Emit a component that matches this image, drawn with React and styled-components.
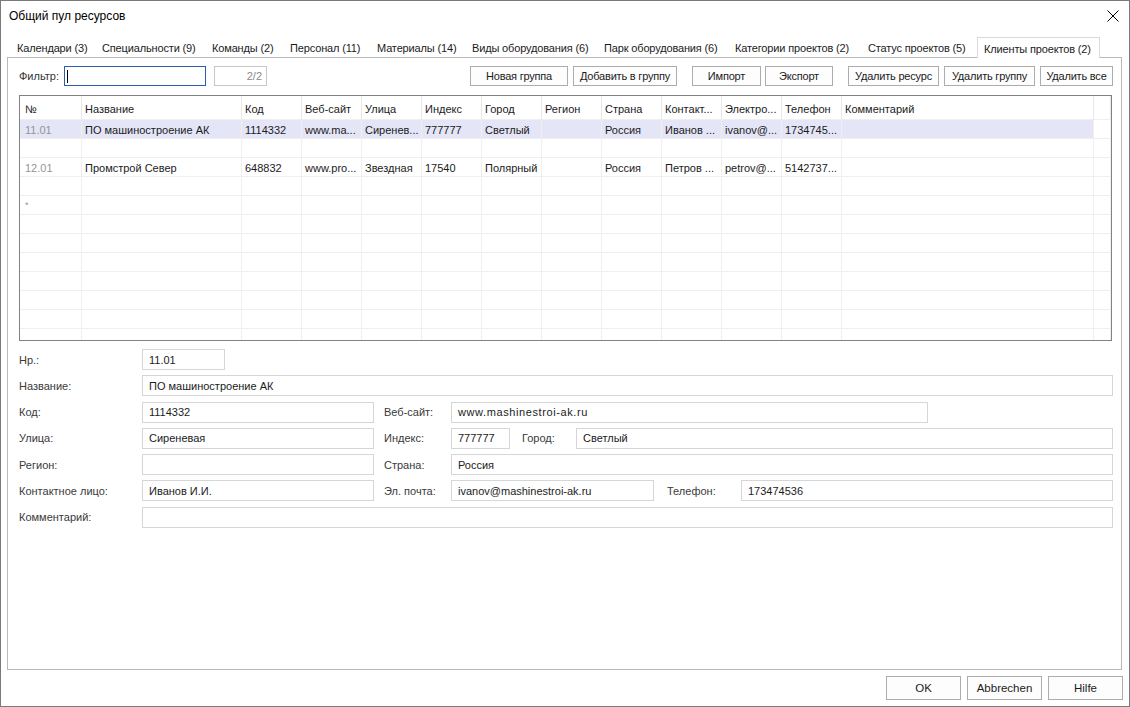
import React from 'react';
import styled, { createGlobalStyle } from 'styled-components';

const GlobalStyle = createGlobalStyle`
  html, body {
    margin: 0;
    padding: 0;
    background: #fff;
  }
  body {
    font-family: "Liberation Sans", Arial, sans-serif;
    font-size: 11px;
    color: #1b1b1b;
  }
  * {
    box-sizing: border-box;
  }
`

const Window = styled.div`
  width: 1130px;
  height: 707px;
  border: 1px solid #7a7a7a;
  display: flex;
  flex-direction: column;
  background: #fff;
`

const TitleBar = styled.div`
  height: 36px;
  flex: none;
  display: flex;
  align-items: center;
  justify-content: space-between;
  padding: 0 9px 6px 8px;
  font-size: 12px;
  color: #000;
`

const CloseButton = styled.div`
  width: 14px;
  height: 14px;
  display: flex;
  align-items: center;
  justify-content: center;
`

const TabStrip = styled.div`
  height: 20px;
  flex: none;
  display: flex;
  align-items: flex-end;
  padding-left: 9px;
  position: relative;
  z-index: 1;
`

const Tab = styled.div`
  width: ${p => p.w}px;
  height: ${p => (p.active ? 21 : 20)}px;
  margin-bottom: ${p => (p.active ? -1 : 0)}px;
  padding-left: ${p => (p.active ? 6 : 7)}px;
  padding-top: 2px;
  display: flex;
  align-items: center;
  white-space: nowrap;
  font-size: 11px;
  letter-spacing: -0.15px;
  color: #1b1b1b;
  background: #fff;
  border: ${p => (p.active ? '1px solid #d9d9d9' : 'none')};
  border-bottom: none;
`

const Panel = styled.div`
  flex: 1;
  margin: 0 7px 0 6px;
  border: 1px solid #b9b9b9;
  padding: 8px 8px 0 11px;
  display: flex;
  flex-direction: column;
`

const Toolbar = styled.div`
  height: 20px;
  display: flex;
  align-items: stretch;
`

const FilterLabel = styled.div`
  width: 45px;
  display: flex;
  align-items: center;
  color: #333;
`

const FilterBox = styled.div`
  width: 142px;
  border: 1px solid #2b5ea8;
  display: flex;
  align-items: center;
  padding-left: 2px;
`

const Caret = styled.span`
  width: 1px;
  height: 13px;
  background: #000;
`

const Counter = styled.div`
  width: 53px;
  margin-left: 8px;
  border: 1px solid #c8c8c8;
  display: flex;
  align-items: center;
  justify-content: flex-end;
  padding-right: 4px;
  color: #8a8a8a;
`

const ToolButton = styled.div`
  width: ${p => p.w}px;
  margin-left: ${p => (p.gap == null ? 'auto' : `${p.gap}px`)};
  border: 1px solid #adadad;
  background: #fdfdfd;
  display: flex;
  align-items: center;
  justify-content: center;
  white-space: nowrap;
  letter-spacing: -0.2px;
  color: #1b1b1b;
`

const Grid = styled.div`
  margin-top: 9px;
  width: 1093px;
  height: 246px;
  border: 1px solid #828282;
  display: grid;
  grid-template-columns: 62px 160px repeat(10, 60px) 252px 17px;
  grid-template-rows: 24px repeat(12, 19px);
  overflow: hidden;
`

const Cell = styled.div`
  border-right: 1px solid ${p => (p.head ? '#e6e6e6' : '#efefef')};
  border-bottom: 1px solid #efefef;
  padding-left: ${p => (p.first ? 5 : 3)}px;
  padding-top: ${p => (p.star ? 0 : 2)}px;
  display: flex;
  align-items: center;
  white-space: nowrap;
  overflow: hidden;
  background: ${p => (p.selected ? '#e4e5f7' : '#fff')};
  color: ${p => (p.muted ? '#959595' : '#1b1b1b')};
  font-size: ${p => (p.star ? 9 : 11)}px;
`

const Form = styled.div`
  margin-top: 8px;
  display: flex;
  flex-direction: column;
  gap: 5.3px;
`

const FormRow = styled.div`
  height: 21px;
  display: flex;
  align-items: stretch;
`

const Label = styled.div`
  width: ${p => p.w}px;
  margin-left: ${p => p.gap || 0}px;
  flex: none;
  display: flex;
  align-items: center;
  color: #3a3a3a;
  white-space: nowrap;
`

const Field = styled.div`
  width: ${p => (p.w ? `${p.w}px` : 'auto')};
  flex: ${p => (p.w ? 'none' : '1')};
  border: 1px solid #d6d6d6;
  display: flex;
  align-items: center;
  padding-left: 6px;
  color: #1b1b1b;
  white-space: nowrap;
  letter-spacing: ${p => (p.wide ? '0.6px' : '0')};
`

const Footer = styled.div`
  height: 36px;
  flex: none;
  display: flex;
  justify-content: flex-end;
  align-items: flex-start;
  gap: 6px;
  padding: 6px 6px 0 0;
`

const DialogButton = styled.div`
  width: 75px;
  height: 24px;
  border: 1px solid #adadad;
  background: #fdfdfd;
  display: flex;
  align-items: center;
  justify-content: center;
  font-size: 11.5px;
  color: #1b1b1b;
`

const tabs = [
  ['Календари (3)', 85],
  ['Специальности (9)', 110],
  ['Команды (2)', 78],
  ['Персонал (11)', 87],
  ['Материалы (14)', 95],
  ['Виды оборудования (6)', 132],
  ['Парк оборудования (6)', 131],
  ['Категории проектов (2)', 133],
  ['Статус проектов (5)', 116],
  ['Клиенты проектов (2)', 123],
]

const tools = [
  ['Новая группа', 98, null],
  ['Добавить в группу', 104, 5],
  ['Импорт', 69, 15],
  ['Экспорт', 68, 4],
  ['Удалить ресурс', 91, 15],
  ['Удалить группу', 91, 5],
  ['Удалить все', 73, 5],
]

const columns = ['№', 'Название', 'Код', 'Веб-сайт', 'Улица', 'Индекс', 'Город', 'Регион', 'Страна', 'Контакт...', 'Электро...', 'Телефон', 'Комментарий', '']

const rows = [
  { selected: true, cells: ['11.01', 'ПО машиностроение АК', '1114332', 'www.ma...', 'Сиренев...', '777777', 'Светлый', '', 'Россия', 'Иванов ...', 'ivanov@...', '1734745...', ''] },
  { cells: [] },
  { cells: ['12.01', 'Промстрой Север', '648832', 'www.pro...', 'Звездная', '17540', 'Полярный', '', 'Россия', 'Петров ...', 'petrov@...', '5142737...', ''] },
  { cells: [] },
  { cells: ['*'], star: true },
  { cells: [] },
  { cells: [] },
  { cells: [] },
  { cells: [] },
  { cells: [] },
  { cells: [] },
  { cells: [] },
]

const App = () => {
  return <>
    <GlobalStyle />
    <Window>
      <TitleBar>
        <span>Общий пул ресурсов</span>
        <CloseButton>
          <svg width="12" height="12" viewBox="0 0 12 12">
            <path d="M0.5 0.5 L11.5 11.5 M11.5 0.5 L0.5 11.5" stroke="#000" strokeWidth="1" />
          </svg>
        </CloseButton>
      </TitleBar>

      <TabStrip>
        {tabs.map(([name, w], i) => (
          <Tab key={name} w={w} active={i === tabs.length - 1}>{name}</Tab>
        ))}
      </TabStrip>

      <Panel>
        <Toolbar>
          <FilterLabel>Фильтр:</FilterLabel>
          <FilterBox><Caret /></FilterBox>
          <Counter>2/2</Counter>
          {tools.map(([name, w, gap]) => (
            <ToolButton key={name} w={w} gap={gap}>{name}</ToolButton>
          ))}
        </Toolbar>

        <Grid>
          {columns.map((c, i) => (
            <Cell key={'h' + i} head first={i === 0}>{c}</Cell>
          ))}
          {rows.map((r, ri) =>
            columns.map((_, ci) => (
              <Cell
                key={ri + '-' + ci}
                first={ci === 0}
                muted={ci === 0}
                star={r.star && ci === 0}
                selected={r.selected && ci < columns.length - 1}
              >
                {r.cells[ci] || ''}
              </Cell>
            ))
          )}
        </Grid>

        <Form>
          <FormRow>
            <Label w={123}>Нр.:</Label>
            <Field w={83}>11.01</Field>
          </FormRow>
          <FormRow>
            <Label w={123}>Название:</Label>
            <Field>ПО машиностроение АК</Field>
          </FormRow>
          <FormRow>
            <Label w={123}>Код:</Label>
            <Field w={232}>1114332</Field>
            <Label w={67} gap={10}>Веб-сайт:</Label>
            <Field w={477} wide>www.mashinestroi-ak.ru</Field>
          </FormRow>
          <FormRow>
            <Label w={123}>Улица:</Label>
            <Field w={232}>Сиреневая</Field>
            <Label w={67} gap={10}>Индекс:</Label>
            <Field w={59}>777777</Field>
            <Label w={54} gap={12}>Город:</Label>
            <Field>Светлый</Field>
          </FormRow>
          <FormRow>
            <Label w={123}>Регион:</Label>
            <Field w={232}></Field>
            <Label w={67} gap={10}>Страна:</Label>
            <Field>Россия</Field>
          </FormRow>
          <FormRow>
            <Label w={123}>Контактное лицо:</Label>
            <Field w={232}>Иванов И.И.</Field>
            <Label w={67} gap={10}>Эл. почта:</Label>
            <Field w={203}>ivanov@mashinestroi-ak.ru</Field>
            <Label w={74} gap={13}>Телефон:</Label>
            <Field>173474536</Field>
          </FormRow>
          <FormRow>
            <Label w={123}>Комментарий:</Label>
            <Field></Field>
          </FormRow>
        </Form>
      </Panel>

      <Footer>
        <DialogButton>OK</DialogButton>
        <DialogButton>Abbrechen</DialogButton>
        <DialogButton>Hilfe</DialogButton>
      </Footer>
    </Window>
  </>
}

export default App;
